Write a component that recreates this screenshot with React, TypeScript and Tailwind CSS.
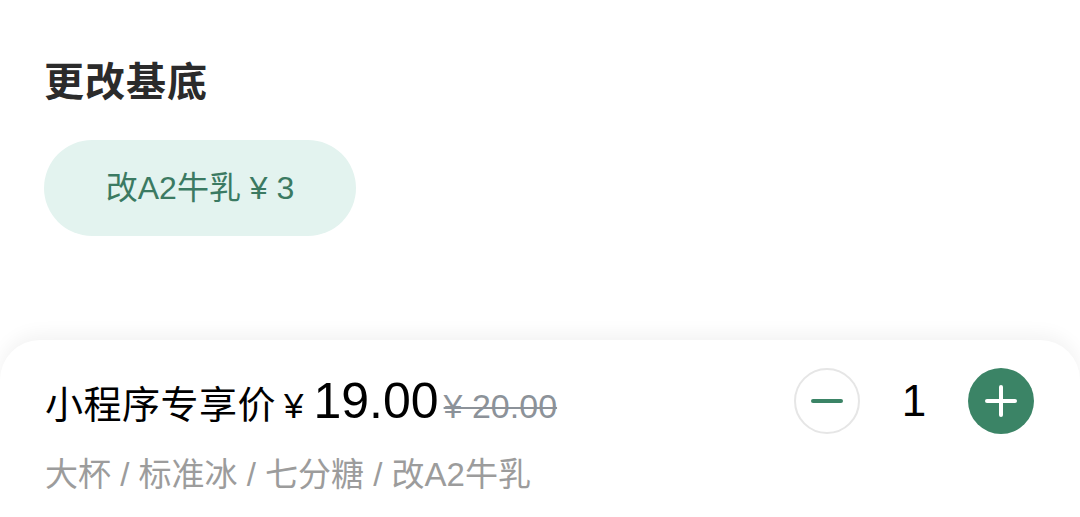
export default function App() {
  return (
    <div
      className="w-[1080px] h-[517px] overflow-hidden bg-white flex flex-col"
      style={{ fontFamily: '"Liberation Sans", "Noto Sans CJK SC", sans-serif' }}
    >
      <div className="h-[340px] shrink-0 px-[44px] pt-[56px]">
        <h2 className="text-[40px] leading-[52px] font-bold text-[#2b2b2b] tracking-[1px]">更改基底</h2>
        <div className="mt-[32px] w-[312px] h-[96px] rounded-full bg-[#e3f3ef] flex items-center justify-center text-[32px] text-[#3b7a62]">
          改A2牛乳 ¥ 3
        </div>
      </div>
      <div className="flex-1 rounded-t-[40px] bg-white shadow-[0_-6px_18px_rgba(0,0,0,0.05)] px-[45px] pt-[28px]">
        <div className="flex items-center justify-between h-[66px]">
          <div className="flex items-baseline text-black">
            <span className="text-[38px] tracking-[0.5px]">小程序专享价</span>
            <span className="text-[35px] ml-[8px]">¥</span>
            <span className="text-[50px] ml-[10px]">19.00</span>
            <span className="text-[34px] text-[#8c9299] line-through decoration-[2px] ml-[5px]">¥ 20.00</span>
          </div>
          <div className="flex items-center mr-[1px]">
            <button className="w-[66px] h-[66px] rounded-full border-2 border-[#e6e6e6] flex items-center justify-center">
              <span className="block w-[32px] h-[4px] rounded-full bg-[#3b8466]" />
            </button>
            <span className="w-[108px] text-center text-[44px] text-black">1</span>
            <button className="w-[66px] h-[66px] rounded-full bg-[#3b8466] flex items-center justify-center relative">
              <span className="absolute w-[32px] h-[4px] rounded-full bg-white" />
              <span className="absolute w-[4px] h-[32px] rounded-full bg-white" />
            </button>
          </div>
        </div>
        <div className="mt-[16px] text-[33px] text-[#9c9c9c]">大杯 / 标准冰 / 七分糖 / 改A2牛乳</div>
      </div>
    </div>
  );
}
